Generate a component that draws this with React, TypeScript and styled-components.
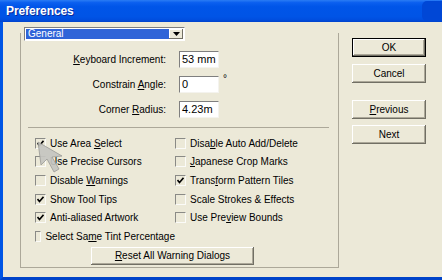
import React from 'react';
import styled, { createGlobalStyle } from 'styled-components';

const Global = createGlobalStyle`
  html, body { margin: 0; padding: 0; background: #ECE9D8; overflow: hidden; }
  #root { width: 442px; height: 280px; }
`;

const Window = styled.div`
  position: relative;
  width: 442px;
  height: 280px;
  display: flex;
  flex-direction: column;
  overflow: hidden;
  background: #ECE9D8;
  color: #000;
  font-family: "Liberation Sans", Arial, sans-serif;
  font-size: 10px;
`;

const TitleBar = styled.div`
  position: relative;
  flex: none;
  height: 22px;
  display: flex;
  align-items: center;
  padding-left: 6px;
  background: linear-gradient(
    to bottom,
    #2a7cf4 0%,
    #0b5fef 12%,
    #0055e8 30%,
    #0054e6 75%,
    #004fe0 88%,
    #0043cc 100%
  );
`;

const Title = styled.span`
  color: #fff;
  font-weight: bold;
  font-size: 12px;
  letter-spacing: -0.1px;
  text-shadow: 1px 1px 0 #0a2a9a;
`;

const CloseStub = styled.div`
  position: absolute;
  right: -8px;
  top: 1px;
  width: 28px;
  height: 20px;
  border-radius: 5px;
  background: #0047d6;
`;

const Body = styled.div`
  flex: 1;
  display: flex;
  align-items: flex-start;
  border-left: 3px solid #0055e5;
  border-bottom: 3px solid #0043c9;
`;

const GroupBox = styled.div`
  box-sizing: border-box;
  margin: 11px 0 0 17px;
  width: 319px;
  height: 235px;
  display: flex;
  flex-direction: column;
  align-items: flex-start;
  border: 1px solid #aca899;
  border-top: none;
`;

const Dropdown = styled.div`
  box-sizing: border-box;
  margin: -6px 0 0 3px;
  width: 161px;
  height: 14px;
  display: flex;
  padding: 1px;
  background: #fff;
  border: 1px solid;
  border-color: #7f7f7f #fff #fff #7f7f7f;
`;

const Selected = styled.div`
  flex: 1;
  background: #2f64d8;
  color: #fff;
  line-height: 10px;
  padding-left: 2px;
  font-size: 10px;
`;

const ArrowBtn = styled.div`
  box-sizing: border-box;
  width: 14px;
  display: flex;
  align-items: center;
  justify-content: center;
  background: #ECE9D8;
  box-shadow: inset -1px -1px #716f64, inset 1px 1px #fff;
`;

const FieldGrid = styled.div`
  margin-top: 10px;
  display: grid;
  grid-template-columns: 145px auto;
  grid-auto-rows: 17px;
  column-gap: 13px;
  row-gap: 8px;
`;

const FieldLabel = styled.div`
  text-align: right;
  line-height: 17px;
  white-space: nowrap;
`;

const FieldCell = styled.div`
  display: flex;
  align-items: flex-start;
`;

const Input = styled.div`
  box-sizing: border-box;
  width: 40px;
  height: 17px;
  padding-left: 2px;
  line-height: 15px;
  overflow: hidden;
  white-space: nowrap;
  background: #fff;
  border: 1px solid;
  border-color: #7f7f7f #f4f3ee #f4f3ee #7f7f7f;
  font-size: 11px;
`;

const Degree = styled.span`
  margin: -3px 0 0 4px;
  font-size: 10px;
`;

const Separator = styled.div`
  align-self: stretch;
  margin: 9px 9px 0 7px;
  border-top: 1px solid #aca899;
`;

const CheckGrid = styled.div`
  margin-top: 6px;
  padding-left: 14px;
  display: grid;
  grid-template-columns: 140px auto;
  grid-template-rows: repeat(6, 18.6px);
  grid-auto-flow: column;
`;

const CheckItem = styled.div`
  display: flex;
  align-items: center;
  gap: 4px;
  white-space: nowrap;
`;

const Box = styled.span`
  box-sizing: border-box;
  width: 11px;
  height: 11px;
  display: flex;
  align-items: center;
  justify-content: center;
  border: 1px solid;
  border-color: #8a8a86 #fbfbf8 #fbfbf8 #8a8a86;
`;

const Button = styled.div<{ $default?: boolean; $width?: number }>`
  box-sizing: border-box;
  width: ${(p) => p.$width ?? 74}px;
  height: 19px;
  display: flex;
  align-items: center;
  justify-content: center;
  background: #ECE9D8;
  white-space: nowrap;
  border: ${(p) => (p.$default ? '1px solid #000' : 'none')};
  box-shadow: inset -1px -1px #716f64, inset 1px 1px #fff, inset -2px -2px #aca899;
`;

const ResetButton = styled(Button)`
  margin: 1px 0 0 70px;
  height: 18px;
`;

const Side = styled.div`
  margin: 16px 0 0 13px;
  display: flex;
  flex-direction: column;
`;

const SideButton = styled(Button)<{ $gap: number }>`
  margin-top: ${(p) => p.$gap}px;
`;

const Cursor = styled.svg`
  position: absolute;
  left: 37px;
  top: 141px;
`;

const Check = () => (
  <svg width="7" height="7" viewBox="0 0 7 7">
    <path d="M0.5 3 L2.5 5.5 L6.5 0.8" fill="none" stroke="#000" strokeWidth="1.6" />
  </svg>
);

const left: [React.ReactNode, boolean][] = [
  [<>Use Area <u>S</u>elect</>, true],
  [<>Use Precise Cursors</>, false],
  [<>Disable <u>W</u>arnings</>, false],
  [<>Show Tool Tips</>, true],
  [<>Anti-aliased Artwork</>, true],
  [<>Select Sa<u>m</u>e Tint Percentage</>, false],
];

const right: [React.ReactNode, boolean][] = [
  [<>Disa<u>b</u>le Auto Add/Delete</>, false],
  [<><u>J</u>apanese Crop Marks</>, false],
  [<>Trans<u>f</u>orm Pattern Tiles</>, true],
  [<>Scale Strokes &amp; Effects</>, false],
  [<>Use Pre<u>v</u>iew Bounds</>, false],
];

export default function App() {
  return (
    <>
      <Global />
      <Window>
        <TitleBar>
          <Title>Preferences</Title>
          <CloseStub />
        </TitleBar>
        <Body>
          <GroupBox>
            <Dropdown>
              <Selected>General</Selected>
              <ArrowBtn>
                <svg width="7" height="4" viewBox="0 0 7 4">
                  <path d="M0 0 H7 L3.5 4 Z" fill="#000" />
                </svg>
              </ArrowBtn>
            </Dropdown>
            <FieldGrid>
              <FieldLabel><u>K</u>eyboard Increment:</FieldLabel>
              <FieldCell><Input>53 mm</Input></FieldCell>
              <FieldLabel>Constrain <u>A</u>ngle:</FieldLabel>
              <FieldCell><Input>0</Input><Degree>°</Degree></FieldCell>
              <FieldLabel>Corner <u>R</u>adius:</FieldLabel>
              <FieldCell><Input>4.23m</Input></FieldCell>
            </FieldGrid>
            <Separator />
            <CheckGrid>
              {[...left, ...right].map(([label, checked], i) => (
                <CheckItem key={i}>
                  <Box>{checked && <Check />}</Box>
                  <span>{label}</span>
                </CheckItem>
              ))}
            </CheckGrid>
            <ResetButton $width={163}><u>R</u>eset All Warning Dialogs</ResetButton>
          </GroupBox>
          <Side>
            <SideButton $gap={0} $default>OK</SideButton>
            <SideButton $gap={7}>Cancel</SideButton>
            <SideButton $gap={17}><u>P</u>revious</SideButton>
            <SideButton $gap={6}>Next</SideButton>
          </Side>
        </Body>
        <Cursor width="30" height="34" viewBox="0 0 30 34">
          <path
            d="M1 1 L4 24 L10 18 L17 31 L22 28 L15 16 L25 15 Z"
            fill="#c4c4c0"
            fillOpacity="0.92"
            stroke="#9a9a96"
            strokeOpacity="0.8"
            strokeWidth="1"
          />
        </Cursor>
      </Window>
    </>
  );
}
